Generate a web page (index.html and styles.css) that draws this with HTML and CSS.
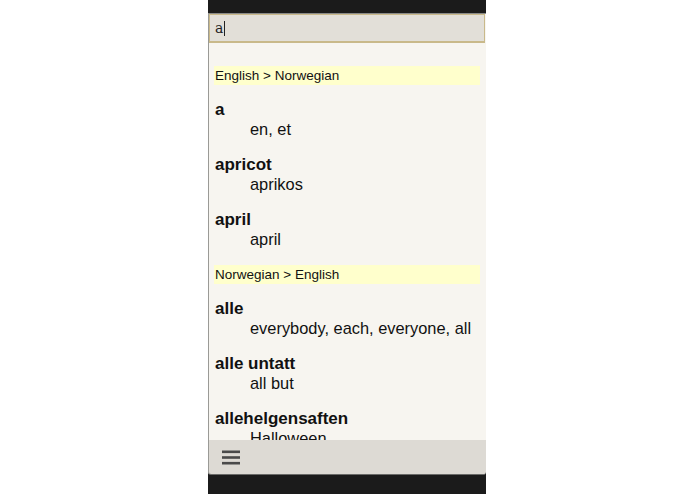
FILE: index.html
```html
<!DOCTYPE html>
<html lang="en">
<head>
<meta charset="UTF-8" />
<meta name="viewport" content="width=device-width, initial-scale=1" />
<title>Dictionary</title>
<link rel="stylesheet" href="styles.css">
</head>
<body>

<div class="phone">
  <div class="status"></div>

  <div class="search-wrap">
    <div class="search">a<span class="caret"></span></div>
  </div>

  <div class="results">
    <div class="lang">English &gt; Norwegian</div>
    <div class="entry">
      <div class="word">a</div>
      <div class="trans">en, et</div>
    </div>
    <div class="entry">
      <div class="word">apricot</div>
      <div class="trans">aprikos</div>
    </div>
    <div class="entry">
      <div class="word">april</div>
      <div class="trans">april</div>
    </div>

    <div class="lang">Norwegian &gt; English</div>
    <div class="entry">
      <div class="word">alle</div>
      <div class="trans">everybody, each, everyone, all</div>
    </div>
    <div class="entry">
      <div class="word">alle untatt</div>
      <div class="trans">all but</div>
    </div>
    <div class="entry">
      <div class="word">allehelgensaften</div>
      <div class="trans">Halloween</div>
    </div>
  </div>

  <div class="toolbar">
    <svg class="menu" width="18" height="15" viewBox="0 0 18 15">
      <rect x="0" y="0.5" width="18" height="2.6" fill="#4a4a4a" />
      <rect x="0" y="6.2" width="18" height="2.6" fill="#4a4a4a" />
      <rect x="0" y="11.9" width="18" height="2.6" fill="#4a4a4a" />
    </svg>
  </div>

  <div class="bottom"></div>
</div>

</body>
</html>
```

FILE: styles.css
```css
body {
  margin: 0;
  background-color: #fff;
  font-family: 'Liberation Sans', Arial, sans-serif;
  color: #111;
}
.phone {
  width: 278px;
  height: 494px;
  margin-left: 208px;
  display: flex;
  flex-direction: column;
  background-color: #1b1b1b;
}
.status {
  height: 13px;
  flex-shrink: 0;
}
.search-wrap {
  height: 31px;
  flex-shrink: 0;
  background-color: #f7f5f0;
  border-left: 1px solid #9a9a96;
  border-top: 1px solid #8a8a88;
  box-sizing: border-box;
  padding: 0 1px 1px 0;
}
.search {
  height: 29px;
  box-sizing: border-box;
  border: 1px solid #c9b98a;
  border-bottom-width: 2px;
  background-color: #e2dfd8;
  font-family: 'DejaVu Serif', serif;
  font-size: 14px;
  padding-left: 5px;
  display: flex;
  align-items: center;
  color: #222;
}
.caret {
  display: inline-block;
  width: 1px;
  height: 15px;
  background-color: #222;
  margin-left: 1px;
}
.results {
  flex: 1;
  overflow: hidden;
  background-color: #f7f5f0;
  border-left: 1px solid #9a9a96;
  padding: 22px 6px 0 5px;
}
.lang {
  background-color: #ffffcc;
  font-size: 13.5px;
  height: 19px;
  line-height: 19px;
  padding-left: 1px;
}
.entry {
  margin-top: 16px;
  font-size: 17px;
}
.lang + .entry {
  margin-top: 15px;
}
.entry + .lang {
  margin-top: 16px;
}
.word {
  font-weight: bold;
  line-height: 20px;
  padding-left: 1px;
}
.trans {
  font-size: 16.4px;
  line-height: 19px;
  padding-left: 36px;
}
.toolbar {
  height: 35px;
  flex-shrink: 0;
  background-color: #dddad4;
  border-left: 1px solid #9a9a96;
  border-bottom: 1px solid #6a6a68;
  border-radius: 0 0 3px 3px;
  box-sizing: border-box;
  display: flex;
  align-items: center;
  padding-left: 13px;
}
.bottom {
  height: 19px;
  flex-shrink: 0;
}
```
